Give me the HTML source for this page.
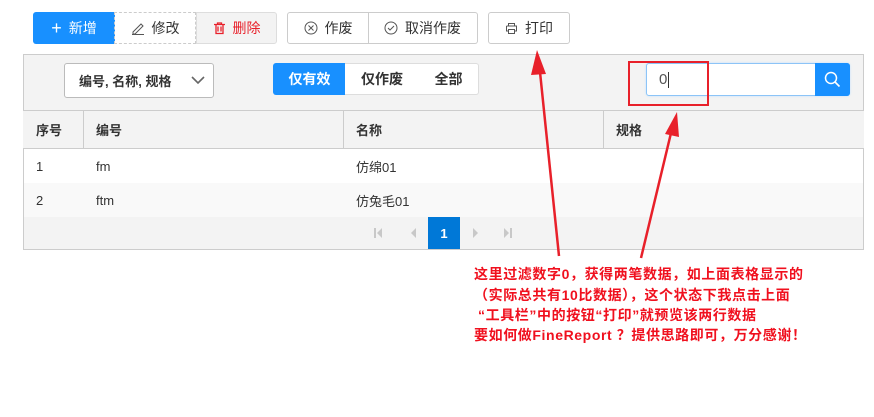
<!DOCTYPE html>
<html><head><meta charset="utf-8"><style>
*{box-sizing:border-box;margin:0;padding:0}
body{width:874px;height:417px;background:#fff;font-family:"Liberation Sans","Noto Sans CJK SC",sans-serif;font-size:14px;color:#333;position:relative;overflow:hidden}
.a{position:absolute}
.btn{position:absolute;top:12px;height:32px;display:flex;align-items:center;justify-content:center;gap:7px;font-size:14px;color:#333}
.cell{position:absolute;display:flex;align-items:center;font-size:13px}
.txt{position:absolute;left:474px;white-space:nowrap;color:#f0101e;font-weight:bold;font-size:14px;letter-spacing:0.6px;line-height:21px}
</style></head><body>
<div class="btn" style="left:33px;width:82px;background:#1890ff;color:#fff;border-radius:3px 0 0 3px"><span style="font-size:18px;line-height:1">+</span>新增</div>
<div class="btn" style="left:114px;width:82px;border:1px dashed #ccc"><svg width="14" height="14" viewBox="0 0 14 14"><path d="M2 11 L10 3 L12 5 L4 13 L2 13Z M1 13.5h12" fill="none" stroke="#555" stroke-width="1"/></svg>修改</div>
<div class="btn" style="left:196px;width:81px;background:#f3f3f3;border:1px solid #ddd;border-radius:0 3px 3px 0;color:#e8202a"><svg width="13" height="13" viewBox="0 0 13 13"><path d="M1 2.5h11M3 2.5v9h7v-9M5 4.5v5M8 4.5v5M4.5 2.5v-1.5h4v1.5" fill="none" stroke="#e8202a" stroke-width="1.3"/></svg>删除</div>
<div class="btn" style="left:287px;width:82px;border:1px solid #ccc;border-radius:3px 0 0 3px"><svg width="14" height="14"><circle cx="7" cy="7" r="6" fill="none" stroke="#555"/><path d="M4.5 4.5l5 5M9.5 4.5l-5 5" stroke="#555"/></svg>作废</div>
<div class="btn" style="left:368px;width:110px;border:1px solid #ccc;border-left:none;border-radius:0 3px 3px 0"><svg width="14" height="14"><circle cx="7" cy="7" r="6" fill="none" stroke="#555"/><path d="M4 7l2 2 4-4" fill="none" stroke="#555"/></svg>取消作废</div>
<div class="btn" style="left:488px;width:82px;border:1px solid #ccc;border-radius:3px"><svg width="13" height="13"><path d="M3.5 4V1.5h6V4M1.5 4h10v5h-2M3.5 9h-2V4M3.5 7.5h6v4h-6z" fill="none" stroke="#555"/></svg>打印</div>

<div class="a" style="left:23px;top:54px;width:841px;height:196px;background:#f3f3f3;border:1px solid #ccc"></div>
<div class="a" style="left:64px;top:63px;width:150px;height:35px;background:#fff;border:1px solid #bbb;border-radius:3px;font-weight:bold;font-size:13px;padding:0 0 0 14px;display:flex;align-items:center">编号, 名称, 规格<svg class="a" style="left:126px;top:11px" width="14" height="10"><path d="M1 2l6 6 6-6" fill="none" stroke="#666" stroke-width="1.6"/></svg></div>
<div class="a" style="left:273px;top:63px;width:73px;height:32px;background:#1890ff;color:#fff;font-weight:bold;font-size:14px;display:flex;align-items:center;justify-content:center;border-radius:3px 0 0 3px">仅有效</div>
<div class="a" style="left:345px;top:63px;width:75px;height:32px;background:#fff;border:1px solid #ddd;border-left:none;font-weight:bold;display:flex;align-items:center;justify-content:center">仅作废</div>
<div class="a" style="left:419px;top:63px;width:60px;height:32px;background:#fff;border:1px solid #ddd;border-left:none;border-radius:0 3px 3px 0;font-weight:bold;display:flex;align-items:center;justify-content:center">全部</div>
<div class="a" style="left:646px;top:63px;width:204px;height:33px;background:#fff;border:1px solid #8cc4f7;border-radius:3px;box-shadow:0 0 2px #bfe0ff;padding-left:12px;display:flex;align-items:center;font-size:15px;color:#555">0<span style="width:1px;height:16px;background:#333;margin-left:1px"></span></div>
<div class="a" style="left:815px;top:63px;width:35px;height:33px;background:#1890ff;border-radius:0 3px 3px 0"><svg class="a" style="left:9px;top:8px" width="17" height="17"><circle cx="7" cy="7" r="5.5" fill="none" stroke="#fff" stroke-width="1.5"/><path d="M11 11l4.5 4.5" stroke="#fff" stroke-width="1.6"/></svg></div>

<div class="a" style="left:23px;top:110px;width:841px;height:39px;border-top:1px solid #ccc;border-bottom:1px solid #ccc;background:#f3f3f3"></div>
<div class="a" style="left:83px;top:111px;width:1px;height:37px;background:#ccc"></div>
<div class="a" style="left:343px;top:111px;width:1px;height:37px;background:#ccc"></div>
<div class="a" style="left:603px;top:111px;width:1px;height:37px;background:#ccc"></div>
<div class="cell" style="left:36px;top:111px;height:37px;font-weight:bold">序号</div>
<div class="cell" style="left:96px;top:111px;height:37px;font-weight:bold">编号</div>
<div class="cell" style="left:356px;top:111px;height:37px;font-weight:bold">名称</div>
<div class="cell" style="left:616px;top:111px;height:37px;font-weight:bold">规格</div>
<div class="a" style="left:24px;top:149px;width:839px;height:34px;background:#fff"></div>
<div class="a" style="left:24px;top:183px;width:839px;height:34px;background:#f9f9f9"></div>
<div class="cell" style="left:36px;top:149px;height:34px">1</div>
<div class="cell" style="left:96px;top:149px;height:34px">fm</div>
<div class="cell" style="left:356px;top:149px;height:34px">仿绵01</div>
<div class="cell" style="left:36px;top:183px;height:34px">2</div>
<div class="cell" style="left:96px;top:183px;height:34px">ftm</div>
<div class="cell" style="left:356px;top:183px;height:34px">仿兔毛01</div>
<svg class="a" style="left:370px;top:226px" width="150" height="14"><path d="M4 2h2v10H4zM7 7l5-5v10z" fill="#c8c8c8"/><path d="M41 7l5-5v10z" fill="#c8c8c8"/><path d="M103 2l5 5-5 5z" fill="#c8c8c8"/><path d="M134 2l5 5-5 5zM140 2h2v10h-2z" fill="#c8c8c8"/></svg>
<div class="a" style="left:428px;top:217px;width:32px;height:32px;background:#0078d7;color:#fff;font-size:13px;font-weight:bold;display:flex;align-items:center;justify-content:center">1</div>

<div class="a" style="left:628px;top:61px;width:81px;height:45px;border:2px solid #e8202a"></div>
<svg class="a" style="left:0;top:0" width="874" height="417">
<path d="M559 256 L540 72" stroke="#e8202a" stroke-width="2.5"/><path d="M537 50 L531 75 L546 74Z" fill="#e8202a"/>
<path d="M641 258 L671 133" stroke="#e8202a" stroke-width="2.5"/><path d="M677 112 L665 134 L679 137Z" fill="#e8202a"/>
</svg>
<div class="txt" style="top:264px">这里过滤数字0，获得两笔数据，如上面表格显示的</div>
<div class="txt" style="top:285px">（实际总共有10比数据），这个状态下我点击上面</div>
<div class="txt" style="top:305px;left:478px">“工具栏”中的按钮“打印”就预览该两行数据</div>
<div class="txt" style="top:325px">要如何做FineReport ？提供思路即可，万分感谢！</div>
</body></html>
